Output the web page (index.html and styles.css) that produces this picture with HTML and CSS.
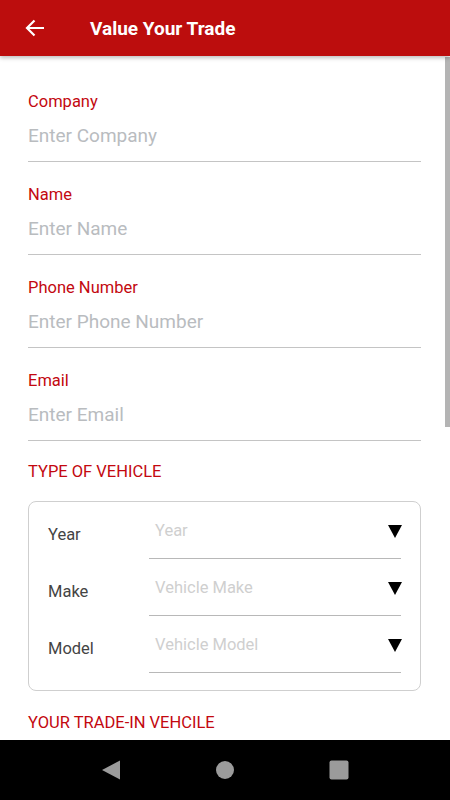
FILE: index.html
```html
<!DOCTYPE html>
<html lang="en">
<head>
    <meta charset="UTF-8">
    <meta name="viewport" content="width=device-width, initial-scale=1.0">
    <title>Value Your Trade</title>
    <link rel="stylesheet" href="styles.css">
</head>
<body>
    <header class="app-bar">
        <button class="back-btn" aria-label="Back">
            <svg width="24" height="24" viewBox="0 0 24 24">
                <path d="M21 12H4.5M11.5 4.5L4 12l7.5 7.5" fill="none" stroke="#fff" stroke-width="2.2"/>
            </svg>
        </button>
        <h1>Value Your Trade</h1>
    </header>
    <main class="content">
        <div class="scroll-thumb"></div>

        <div class="fields">
            <div class="field">
                <label>Company</label>
                <div class="placeholder">Enter Company</div>
            </div>
            <div class="field">
                <label>Name</label>
                <div class="placeholder">Enter Name</div>
            </div>
            <div class="field">
                <label>Phone Number</label>
                <div class="placeholder">Enter Phone Number</div>
            </div>
            <div class="field">
                <label>Email</label>
                <div class="placeholder">Enter Email</div>
            </div>
        </div>

        <h2 class="section-title">TYPE OF VEHICLE</h2>
        <div class="vehicle-box">
            <div class="vehicle-row">
                <span class="row-label">Year</span>
                <div class="select">
                    <span>Year</span>
                    <svg class="caret" width="14" height="13" viewBox="0 0 14 13"><path d="M0 0H14L7 13Z" fill="#000"/></svg>
                </div>
            </div>
            <div class="vehicle-row">
                <span class="row-label">Make</span>
                <div class="select">
                    <span>Vehicle Make</span>
                    <svg class="caret" width="14" height="13" viewBox="0 0 14 13"><path d="M0 0H14L7 13Z" fill="#000"/></svg>
                </div>
            </div>
            <div class="vehicle-row">
                <span class="row-label">Model</span>
                <div class="select">
                    <span>Vehicle Model</span>
                    <svg class="caret" width="14" height="13" viewBox="0 0 14 13"><path d="M0 0H14L7 13Z" fill="#000"/></svg>
                </div>
            </div>
        </div>

        <h2 class="section-title trade-in">YOUR TRADE-IN VEHCILE</h2>
    </main>
    <nav class="sys-nav">
        <svg width="20" height="20" viewBox="0 0 20 20"><path d="M1 10L19 0.5V19.5Z" fill="#9b9b9b"/></svg>
        <svg width="20" height="20" viewBox="0 0 20 20"><circle cx="10" cy="10" r="9" fill="#9b9b9b"/></svg>
        <svg width="20" height="20" viewBox="0 0 20 20"><rect x="0.5" y="0.5" width="19" height="19" rx="2" fill="#9b9b9b"/></svg>
    </nav>
</body>
</html>
```

FILE: styles.css
```css
body {
    font-family: Roboto, "Liberation Sans", sans-serif;
    margin: 0;
    padding: 0;
    height: 800px;
    display: flex;
    flex-direction: column;
    background-color: #fff;
    overflow: hidden;
}
.app-bar {
    height: 56px;
    flex-shrink: 0;
    display: flex;
    align-items: center;
    background-color: #bc0d0d;
    box-shadow: 0 2px 4px rgba(0, 0, 0, 0.25);
    position: relative;
    z-index: 2;
}
.back-btn {
    background: none;
    border: none;
    padding: 0;
    margin-left: 23px;
    width: 24px;
    height: 24px;
    display: flex;
}
.app-bar h1 {
    margin: 0 0 0 43px;
    color: #fff;
    font-size: 19px;
    font-weight: 700;
}
.content {
    flex: 1;
    position: relative;
    overflow: hidden;
    padding: 35px 29px 0 28px;
}
.scroll-thumb {
    position: absolute;
    top: 1px;
    right: 0;
    width: 5px;
    height: 370px;
    background-color: #b4b4b4;
}
.fields {
    display: flex;
    flex-direction: column;
    gap: 22px;
    margin-bottom: 21px;
}
.field {
    padding-bottom: 12px;
    border-bottom: 1px solid #c4c4c4;
}
.field label {
    display: block;
    margin-top: 1px;
    color: #c3080f;
    font-size: 16.5px;
    line-height: 20px;
}
.placeholder {
    margin-top: 11px;
    color: #b9bcbf;
    font-size: 19px;
    line-height: 26px;
}
.section-title {
    margin: 0;
    color: #c3080f;
    font-size: 16.5px;
    font-weight: 400;
    line-height: 20px;
}
.vehicle-box {
    margin: 19px 0 22px;
    border: 1px solid #cfcfcf;
    border-radius: 8px;
    padding: 0 19px 17px 19px;
}
.vehicle-row {
    display: flex;
    height: 57px;
}
.row-label {
    width: 101px;
    padding-top: 22px;
    color: #444;
    font-size: 16.5px;
    line-height: 22px;
}
.select {
    flex: 1;
    display: flex;
    justify-content: space-between;
    padding: 18px 0 0 6px;
    border-bottom: 1px solid #b8b8b8;
    color: #cfcfcf;
    font-size: 16.5px;
    line-height: 22px;
}
.caret {
    margin-top: 5px;
    margin-right: -1px;
}
.sys-nav {
    height: 60px;
    flex-shrink: 0;
    background-color: #000;
    display: flex;
    justify-content: center;
    align-items: center;
    gap: 94px;
}
```
